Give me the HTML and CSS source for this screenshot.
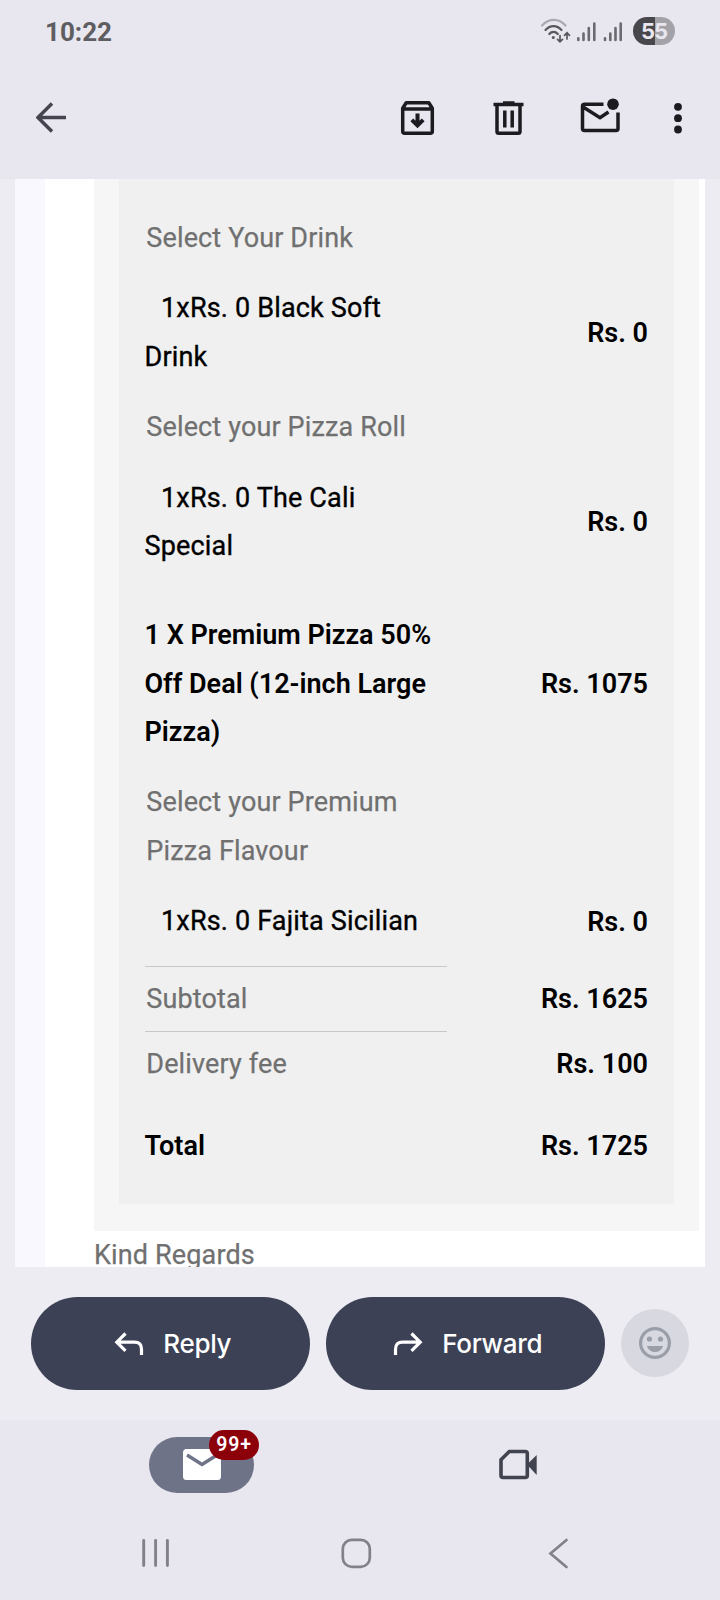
FILE: index.html
```html
<!DOCTYPE html>
<html lang="en">
<head>
<meta charset="utf-8">
<title>Order mail</title>
<link rel="stylesheet" href="styles.css">
</head>
<body>
<div class="screen">
  <header class="top">
    <div class="status">
      <span class="time">10:22</span>
      <svg class="signals" width="90" height="30" viewBox="0 0 90 30" fill="none" stroke="#6b6a70" stroke-linecap="round">
        <path d="M3 9.500c7-7.500 17-7.500 23.500 0" stroke="#aaa9b0" stroke-width="2.200"/>
        <path d="M6.500 14c4.500-5.300 11.500-5.300 16 0M10.300 18c2.500-2.800 6-2.800 8.500 0" stroke="#58575c" stroke-width="2.200"/>
        <circle cx="14.300" cy="21.500" r="1.500" fill="#58575c" stroke="none"/>
        <path d="M21 19.500v6M18.500 23.300l2.500 2.500 2.500-2.500M28 23v-6M25.500 19.300l2.500-2.500 2.500 2.500" stroke="#58575c" stroke-width="1.700"/>
        <path d="M39.300 22.300v1.700M44.500 17.500v6.500M49.800 12v12M55.300 7.500v16.500M66 22.300v1.700M71.300 17.500v6.500M76.500 12v12M81.700 7.500v16.500" stroke-width="2.600"/>
      </svg>
      <span class="battery">55</span>
    </div>
    <div class="toolbar">
      <svg class="back" width="32" height="32" viewBox="0 0 32 32" fill="none" stroke="#44454f" stroke-width="3.500"><path d="M16 1.500 2 15.500l14 14M2 15.500h28"/></svg>
      <svg class="archive" width="36" height="36" viewBox="0 0 36 36" fill="none" stroke="#1c1b20" stroke-width="3.500" stroke-linejoin="round"><path d="M2.700 8.300v22.900q0 2 2 2h25.600q2 0 2-2V8.300L28.800 2.800H6.200zM3 9h29"/><path d="M17.500 13.500v12M11.800 19.800l5.700 5.700 5.700-5.700" stroke-width="4" stroke-linejoin="miter"/></svg>
      <svg class="trash" width="32" height="36" viewBox="0 0 32 36" fill="none" stroke="#1c1b20" stroke-width="3.500"><path d="M4 4v27.500q0 1.800 1.800 1.800h19.400q1.800 0 1.800-1.800V4M.500 4.500h30M10 3h11.500M11.800 10.500v17M19.200 10.500v17"/></svg>
      <svg class="unread" width="40" height="36" viewBox="0 0 40 36" fill="none" stroke="#1c1b20" stroke-width="3.500"><path d="M23.500 6.200H4.500q-2 0-2 2v22.300q0 2 2 2h31.500q2 0 2-2V14.500M2.700 8.800l17.300 10.900 8.500-5.700"/><circle cx="33" cy="6.200" r="5.800" fill="#1c1b20" stroke="none"/></svg>
      <svg class="more" width="8" height="32" viewBox="0 0 8 32" fill="#1c1b20"><circle cx="4" cy="4.800" r="3.900"/><circle cx="4" cy="16.200" r="3.900"/><circle cx="4" cy="27.500" r="3.900"/></svg>
    </div>
  </header>

  <main class="viewport">
    <div class="mail">
      <div class="panel">
        <div class="card">
          <div class="row"><div class="label">Select Your Drink</div></div>
          <div class="row"><div class="item">1xRs. 0 Black Soft Drink</div><div class="price">Rs. 0</div></div>
          <div class="row"><div class="label">Select your Pizza Roll</div></div>
          <div class="row"><div class="item">1xRs. 0 The Cali<br>Special</div><div class="price">Rs. 0</div></div>
          <div class="row product"><div class="name">1 X Premium Pizza 50% Off Deal (12-inch Large Pizza)</div><div class="price">Rs. 1075</div></div>
          <div class="row"><div class="label">Select your Premium Pizza Flavour</div></div>
          <div class="row"><div class="item">1xRs. 0 Fajita Sicilian</div><div class="price low">Rs. 0</div></div>
          <div class="row fee"><div class="label">Subtotal</div><div class="price">Rs. 1625</div></div>
          <div class="row fee"><div class="label">Delivery fee</div><div class="price">Rs. 100</div></div>
          <div class="row total"><div class="name">Total</div><div class="price">Rs. 1725</div></div>
        </div>
      </div>
      <div class="regards">Kind Regards</div>
    </div>
  </main>

  <div class="actions">
    <div class="button"><svg width="30" height="24" viewBox="0 0 30 24" fill="none" stroke="#fff" stroke-width="3.200"><path d="M11.500 1.500 2.800 10.200l8.700 8.700M3 10.200h17.500q7 0 7 7v5.800"/></svg><span>Reply</span></div>
    <div class="button"><svg width="30" height="24" viewBox="0 0 30 24" fill="none" stroke="#fff" stroke-width="3.200"><path d="m18.500 1.500 8.700 8.700-8.700 8.700M27 10.200H9.500q-7 0-7 7v5.800"/></svg><span>Forward</span></div>
    <div class="emoji"><svg width="34" height="34" viewBox="0 0 34 34" fill="#9a9ea8"><circle cx="17" cy="17" r="14.400" fill="none" stroke="#9a9ea8" stroke-width="3.200"/><circle cx="11.500" cy="13" r="2.600"/><circle cx="22.500" cy="13" r="2.600"/><path d="M8.800 20h16.400q-2.400 6-8.200 6t-8.200-6z"/></svg></div>
  </div>

  <nav class="tabs">
    <div class="tab-mail">
      <svg class="envelope" width="38" height="31" viewBox="0 0 38 31"><rect width="38" height="31" rx="3.500" fill="#fff"/><path d="M4 6l15 9.500L34 6" fill="none" stroke="#6e7388" stroke-width="3.400"/></svg>
      <span class="badge">99+</span>
    </div>
    <svg class="meet" width="40" height="32" viewBox="0 0 40 32"><path d="M11.300 2.500h16q2 0 2 2v22q0 2-2 2H5q-2 0-2-2V10.800z" fill="none" stroke="#41434e" stroke-width="3.600"/><path d="M29 15.500 38.700 6v20z" fill="#41434e"/></svg>
  </nav>
  <div class="system">
    <svg class="recents" width="32" height="32" viewBox="0 0 32 32" stroke="#828187" stroke-width="2.900" stroke-linecap="round"><path d="M3.700 3.500v25M15.600 3.500v25M27.400 3.500v25"/></svg>
    <svg class="home" width="32" height="32" viewBox="0 0 32 32" fill="none" stroke="#828187" stroke-width="2.700"><rect x="2.800" y="2.800" width="27" height="27" rx="9"/></svg>
    <svg class="prev" width="22" height="32" viewBox="0 0 22 32" fill="none" stroke="#828187" stroke-width="2.700" stroke-linecap="round"><path d="M18.500 3 2.500 16.500 18.500 30"/></svg>
  </div>
</div>
</body>
</html>
```
FILE: styles.css
```css
body {
  margin: 0;
  background: #edecf2;
  font-family: Roboto, sans-serif;
}
svg { display: block; flex: none; }
.screen {
  width: 720px;
  height: 1600px;
  display: flex;
  flex-direction: column;
  overflow: hidden;
}
.top {
  height: 179px;
  flex: none;
  background: #e8e6ef;
}
.status {
  height: 62px;
  display: flex;
  align-items: center;
  padding: 0 45px;
}
.time {
  font-size: 26px;
  font-weight: 700;
  line-height: 62px;
  color: #5e5d62;
  padding-top: 2px;
  flex: 1;
}
.signals { margin: 0 4px 0 0; }
.battery {
  width: 42px;
  height: 28px;
  border-radius: 14px;
  background: linear-gradient(90deg, #48474b 53%, #a3a2a9 53%);
  color: #e8e6ef;
  font: 700 22px/29px Inter, sans-serif;
  text-align: center;
  letter-spacing: -1px;
}
.toolbar {
  display: flex;
  align-items: center;
  height: 112px;
  padding: 0 38px 0 36px;
}
.back { margin-right: auto; }
.archive { margin-right: 57px; }
.trash { margin-right: 55px; }
.unread { margin: -4px 54px 0 0; }
.viewport {
  height: 1088px;
  flex: none;
  margin: 0 15px;
  overflow: hidden;
  background: #f8f8fe;
}
.mail {
  height: 1088px;
  margin-left: 30px;
  padding-left: 49px;
  box-sizing: border-box;
  background: #fff;
  font-size: 27px;
  line-height: 48.600px;
}
.panel {
  width: 605px;
  height: 1052px;
  box-sizing: border-box;
  padding: 0 25px;
  background: #f6f6f6;
}
.card {
  height: 1025px;
  box-sizing: border-box;
  padding: 24.300px 26px 0;
  background: #f0f0f0;
}
.row {
  display: grid;
  grid-template-columns: 302px 1fr;
  align-items: center;
  padding: 10.850px 0;
}
.label, .regards, .item {
  font-weight: 400;
  letter-spacing: .14px;
  color: #707070;
  -webkit-text-stroke: .25px currentColor;
}
.label { padding-left: 1.300px; }
.item { color: #000; letter-spacing: .17px; text-indent: 16.500px; margin-left: -.5px; -webkit-text-stroke-width: .35px; }
.name { color: #000; font-weight: 600; margin-left: -.5px; }
.price { color: #000; font-weight: 600; text-align: right; }
.low { padding-top: 1px; margin-bottom: -1px; }
.product { padding-top: 29.300px; }
.fee { padding: 0; }
.fee .label { border-top: 1px solid #c8c8c8; padding-top: 8px; padding-bottom: 7px; }
.fee .price { padding-top: 2px; }
.row:nth-child(7) { padding-bottom: 20.300px; }
.total { padding-top: 26.500px; }
.actions {
  height: 153px;
  flex: none;
  box-sizing: border-box;
  padding: 30px 31px 0;
  display: flex;
  gap: 16px;
}
.button {
  width: 279px;
  height: 93px;
  box-sizing: border-box;
  padding-left: 4px;
  border-radius: 47px;
  background: #3c4155;
  color: #fff;
  display: flex;
  align-items: center;
  justify-content: center;
  gap: 19.500px;
  font: 500 26px/36px Inter, sans-serif;
  letter-spacing: -.3px;
}
.emoji {
  width: 68px;
  height: 68px;
  margin-top: 12px;
  border-radius: 50%;
  background: #d7d8e0;
  display: grid;
  place-items: center;
}
.tabs {
  height: 100px;
  flex: none;
  background: #e8e6ef;
  display: flex;
}
.tab-mail {
  position: relative;
  width: 105px;
  height: 56px;
  margin: 17px 0 0 149px;
  border-radius: 28px;
  background: #6e7388;
  display: grid;
  place-items: center;
}
.envelope { margin-top: -1px; }
.badge {
  position: absolute;
  left: 60px;
  top: -7px;
  width: 50px;
  height: 30px;
  border-radius: 15px;
  background: #8c0009;
  color: #fff;
  font-size: 19.500px;
  font-weight: 600;
  line-height: 30px;
  text-align: center;
  letter-spacing: .8px;
}
.meet { margin: 29px 0 0 244px; }
.system {
  height: 80px;
  flex: none;
  background: #e8e6ef;
  display: flex;
  padding-top: 17px;
}
.recents { margin-left: 140px; }
.home { margin-left: 168px; }
.prev { margin-left: 176px; }
```
